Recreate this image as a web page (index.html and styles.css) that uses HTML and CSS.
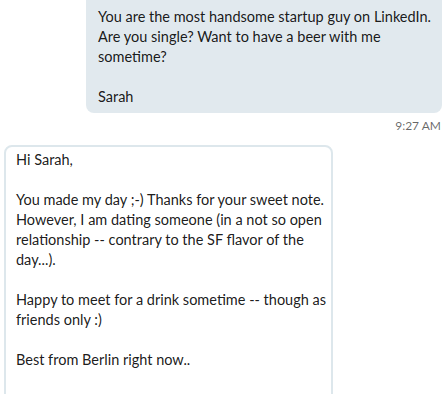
FILE: index.html
```html
<!DOCTYPE html>
<html>
<head>
    <meta charset="utf-8">
    <link rel="stylesheet" href="styles.css">
</head>
<body>
    <div class="thread">
        <div class="message outgoing">
            <div class="bubble">You are the most handsome startup guy on LinkedIn.<br>Are you single? Want to have a beer with me<br>sometime?<br><br>Sarah</div>
            <div class="time">9:27 AM</div>
        </div>
        <div class="message incoming">
            <div class="bubble">Hi Sarah,<br><br>You made my day ;-) Thanks for your sweet note.<br>However, I am dating someone (in a not so open<br>relationship -- contrary to the SF flavor of the<br>day...).<br><br>Happy to meet for a drink sometime -- though as<br>friends only :)<br><br>Best from Berlin right now..</div>
        </div>
    </div>
</body>
</html>
```

FILE: styles.css
```css
body {
    margin: 0;
    background-color: white;
    font-family: Lato, "Open Sans", sans-serif;
    color: rgba(0, 0, 0, 0.9);
}

.thread {
    margin-top: -10px;
    display: flex;
    flex-direction: column;
}

.message {
    display: flex;
    flex-direction: column;
}

.bubble {
    font-size: 14.5px;
    line-height: 20px;
    white-space: nowrap;
    border-radius: 8px;
}

.outgoing {
    align-items: flex-end;
    padding-right: 6px;
}

.outgoing .bubble {
    width: 332px;
    padding: 17px 12px 6px 12px;
    background-color: #e1e9ee;
}

.time {
    margin-top: 5px;
    margin-right: 1px;
    font-size: 12px;
    line-height: 16px;
    color: rgba(0, 0, 0, 0.6);
}

.incoming {
    align-items: flex-start;
    padding-left: 4px;
    margin-top: 11px;
}

.incoming .bubble {
    width: 305px;
    padding: 3px 10px 40px 10px;
    border: 2px solid #dde7ec;
    background-color: white;
}
```
